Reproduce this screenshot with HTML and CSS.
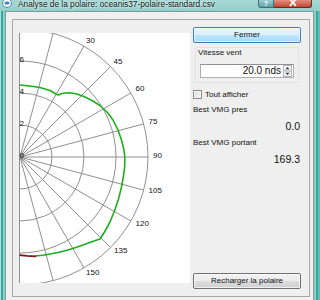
FILE: index.html
```html
<!DOCTYPE html>
<html lang="fr">
<head>
<meta charset="utf-8">
<title>Analyse de la polaire</title>
<link rel="stylesheet" href="styles.css">
</head>
<body>
<div class="window">
  <div class="titlebar">
    <svg class="appicon" width="10" height="10" viewBox="0 0 10 10">
      <circle cx="5" cy="5" r="4.5" fill="#eef6fb" stroke="#5b8fb8" stroke-width="1"/>
      <path d="M2 5 Q5 2 8 5 Q5 8 2 5Z" fill="#3f7fc0"/>
    </svg>
    <span class="title">Analyse de la polaire: oceanis37-polaire-standard.csv</span>
    <div class="caption-btns">
      <span class="cap-help">?</span>
      <span class="cap-close">
        <svg width="10" height="7" viewBox="0 0 10 7"><path d="M2 -1 L8 6 M8 -1 L2 6" stroke="#fff" stroke-width="1.8" fill="none"/></svg>
      </span>
    </div>
  </div>
  <div class="client">
    <div class="panel">
      <div class="plot">
        <svg width="171" height="250" viewBox="19 33 171 250">
          <g class="grid" fill="none" stroke="#8f8f8f" stroke-width="1">
            <path d="M20 125 A32 32 0 0 1 20 189"/>
            <path d="M20 93 A64 64 0 0 1 20 221"/>
            <path d="M20 61 A96 96 0 0 1 20 253"/>
            <path d="M20 29 A128 128 0 0 1 20 285"/>
            <path d="M19.5 29 L19.5 285"/>
            <path d="M20 157 L53.1 33.4"/>
            <path d="M20 157 L84 46.1"/>
            <path d="M20 157 L110.5 66.5"/>
            <path d="M20 157 L130.9 93"/>
            <path d="M20 157 L143.6 123.9"/>
            <path d="M20 157 L148 157"/>
            <path d="M20 157 L143.6 190.1"/>
            <path d="M20 157 L130.9 221"/>
            <path d="M20 157 L110.5 247.5"/>
            <path d="M20 157 L84 267.9"/>
            <path d="M20 157 L53.1 280.6"/>
          </g>
          <g class="labels">
            <text x="19.5" y="158">0</text>
            <text x="19.5" y="126">2</text>
            <text x="19.5" y="94">4</text>
            <text x="19.5" y="61.5">6</text>
            <text x="86" y="43">30</text>
            <text x="113.5" y="64">45</text>
            <text x="135.5" y="91">60</text>
            <text x="148.5" y="124">75</text>
            <text x="153" y="158">90</text>
            <text x="148.5" y="193">105</text>
            <text x="135.5" y="226">120</text>
            <text x="114" y="253">135</text>
            <text x="86" y="275">150</text>
          </g>
          <polyline fill="none" stroke="#1cae1c" stroke-width="1.6" stroke-linejoin="round"
            points="19.5,85 30,86 40,87.5 50,90.5 56,94 58.5,95 61,93.8 65,93 70,92.8 76,93.8 84,96.5 92,100.5 100,105.5 107,112 113,120 118,130 121.5,140 123.8,149 124.8,157 124.7,166 123.5,176 121.5,187 118.5,199 114.5,211 109.5,223 104.5,232 100,239 91,242 83,245 75,247.8 67,250.3 58,252.5 50,254 43,255.2 35,256"/>
          <polyline fill="none" stroke="#7a1212" stroke-width="1.8" points="19.5,255.2 27,255.8 36,256.3"/>
        </svg>
      </div>
      <div class="side">
        <button class="btn btn-default">Fermer</button>
        <div class="group">
          <div class="group-label">Vitesse vent</div>
          <div class="spin">
            <span class="spin-value">20.0 nds</span>
            <span class="spin-arrows">
              <svg width="9" height="12" viewBox="0 0 9 12">
                <rect x="0.5" y="0.5" width="8" height="5.5" fill="#f3f3f3" stroke="#b8b8b8"/>
                <rect x="0.5" y="6" width="8" height="5.5" fill="#ececec" stroke="#b8b8b8"/>
                <path d="M4.5 2 L6.5 4.3 L2.5 4.3Z" fill="#333"/>
                <path d="M2.5 7.7 L6.5 7.7 L4.5 10Z" fill="#333"/>
              </svg>
            </span>
          </div>
        </div>
        <label class="check"><span class="box"></span><span>Tout afficher</span></label>
        <div class="stat-label">Best VMG pres</div>
        <div class="stat-value">0.0</div>
        <div class="stat-label">Best VMG portant</div>
        <div class="stat-value">169.3</div>
        <button class="btn btn-reload">Recharger la polaire</button>
      </div>
    </div>
  </div>
</div>
</body>
</html>
```

FILE: styles.css
```css
html, body {
  margin: 0;
  padding: 0;
}
body {
  width: 320px;
  height: 300px;
  overflow: hidden;
  font-family: "Liberation Sans", Arial, sans-serif;
  font-size: 8px;
  color: #111;
  background: linear-gradient(to right,
    #b4dcd8 0, #b4dcd8 1px,
    #36a8a0 1px, #36a8a0 3px,
    #8ccfca 3px, #8ccfca 5px,
    #6cc0ba 5px, #6cc0ba 314px,
    #8ccfca 314px, #8ccfca 316px,
    #36a8a0 316px, #36a8a0 318px,
    #62bdb6 318px);
}
.window {
  height: 300px;
  display: flex;
  flex-direction: column;
}
.titlebar {
  height: 11px;
  flex: none;
  display: flex;
  align-items: flex-start;
  background: linear-gradient(to bottom, #a6d8d4, #93cfca);
  overflow: hidden;
}
.appicon {
  margin: -2px 0 0 2px;
  flex: none;
}
.title {
  margin: 0 0 0 6px;
  font-size: 8.3px;
  line-height: 9px;
  white-space: nowrap;
  color: #101010;
  text-shadow: 0 0 3px #eafaf8, 0 0 2px #eafaf8;
}
.caption-btns {
  margin-left: auto;
  margin-right: 8px;
  display: flex;
  height: 8px;
}
.cap-help {
  width: 14px;
  height: 7px;
  border: 1px solid #3d6f74;
  border-top: none;
  border-radius: 0 0 0 3px;
  background: linear-gradient(to bottom, #9ccfd1, #5c9fa5);
  color: #fff;
  font-size: 7px;
  font-weight: bold;
  line-height: 7px;
  text-align: center;
}
.cap-close {
  width: 37px;
  height: 7px;
  border: 1px solid #6b2a22;
  border-left: none;
  border-top: none;
  border-radius: 0 0 3px 0;
  background: linear-gradient(to bottom, #e2907f, #c5432f);
  display: flex;
  justify-content: center;
  align-items: flex-start;
}
.client {
  flex: 1;
  margin: 0 6px 0 5px;
  border: 1px solid #7d9c9a;
  border-bottom: none;
  background: #f0f0f0;
  padding: 7px 3px 0 6px;
}
.panel {
  height: 276px;
  border: 1px solid #a9a9a9;
  display: flex;
  align-items: stretch;
  background: #efefef;
}
.plot {
  width: 171px;
  height: 250px;
  margin: 13px 0 0 6px;
  background: #fff;
  flex: none;
}
.plot svg {
  display: block;
}
.labels text {
  font-family: "Liberation Sans", Arial, sans-serif;
  font-size: 8px;
  fill: #111;
}
.side {
  width: 108px;
  margin-left: 3px;
  padding: 7px 0 7px 0;
  display: flex;
  flex-direction: column;
}
.btn {
  font-family: "Liberation Sans", Arial, sans-serif;
  font-size: 8px;
  color: #111;
  height: 16px;
  width: 108px;
  padding: 0;
  border-radius: 2px;
  line-height: 14px;
  text-align: center;
}
.btn-default {
  border: 1px solid #3c7fb1;
  background: linear-gradient(to bottom, #eaf6fd 0, #d9f0fc 50%, #bee6fd 50%, #a7d9f5 100%);
  box-shadow: inset 0 0 0 1px rgba(255,255,255,0.6);
}
.btn-reload {
  margin-top: auto;
  border: 1px solid #707070;
  background: linear-gradient(to bottom, #f2f2f2 0, #ebebeb 50%, #dddddd 50%, #cfcfcf 100%);
  box-shadow: inset 0 0 0 1px rgba(255,255,255,0.7);
}
.group {
  margin: 4px 2px 0 2px;
  height: 34px;
  border: 1px solid #e2e2e2;
  border-radius: 2px;
  padding: 0 0 0 1px;
}
.group-label {
  line-height: 10px;
  padding-left: 1px;
}
.spin {
  margin: 6px 0 0 3px;
  width: 94px;
  height: 14px;
  box-sizing: border-box;
  border: 1px solid #abadb3;
  border-top-color: #8e9096;
  background: #fff;
  display: flex;
  align-items: center;
}
.spin-value {
  flex: 1;
  text-align: right;
  font-size: 10px;
  line-height: 12px;
  padding-right: 2px;
}
.spin-arrows {
  width: 10px;
  display: flex;
  align-items: center;
}
.spin-arrows svg {
  display: block;
}
.check {
  margin-top: 7px;
  height: 9px;
  display: flex;
  align-items: center;
  gap: 3px;
  line-height: 9px;
}
.box {
  width: 7px;
  height: 7px;
  border: 1px solid #8e8f8f;
  background: linear-gradient(135deg, #dcdcdc, #f7f7f7);
  box-shadow: inset 0 0 0 1px #f4f4f4;
}
.stat-label {
  line-height: 10px;
  margin-top: 6px;
}
.stat-value {
  font-size: 10.5px;
  line-height: 12px;
  text-align: right;
  padding-right: 1px;
  margin-top: 5px;
}
```
